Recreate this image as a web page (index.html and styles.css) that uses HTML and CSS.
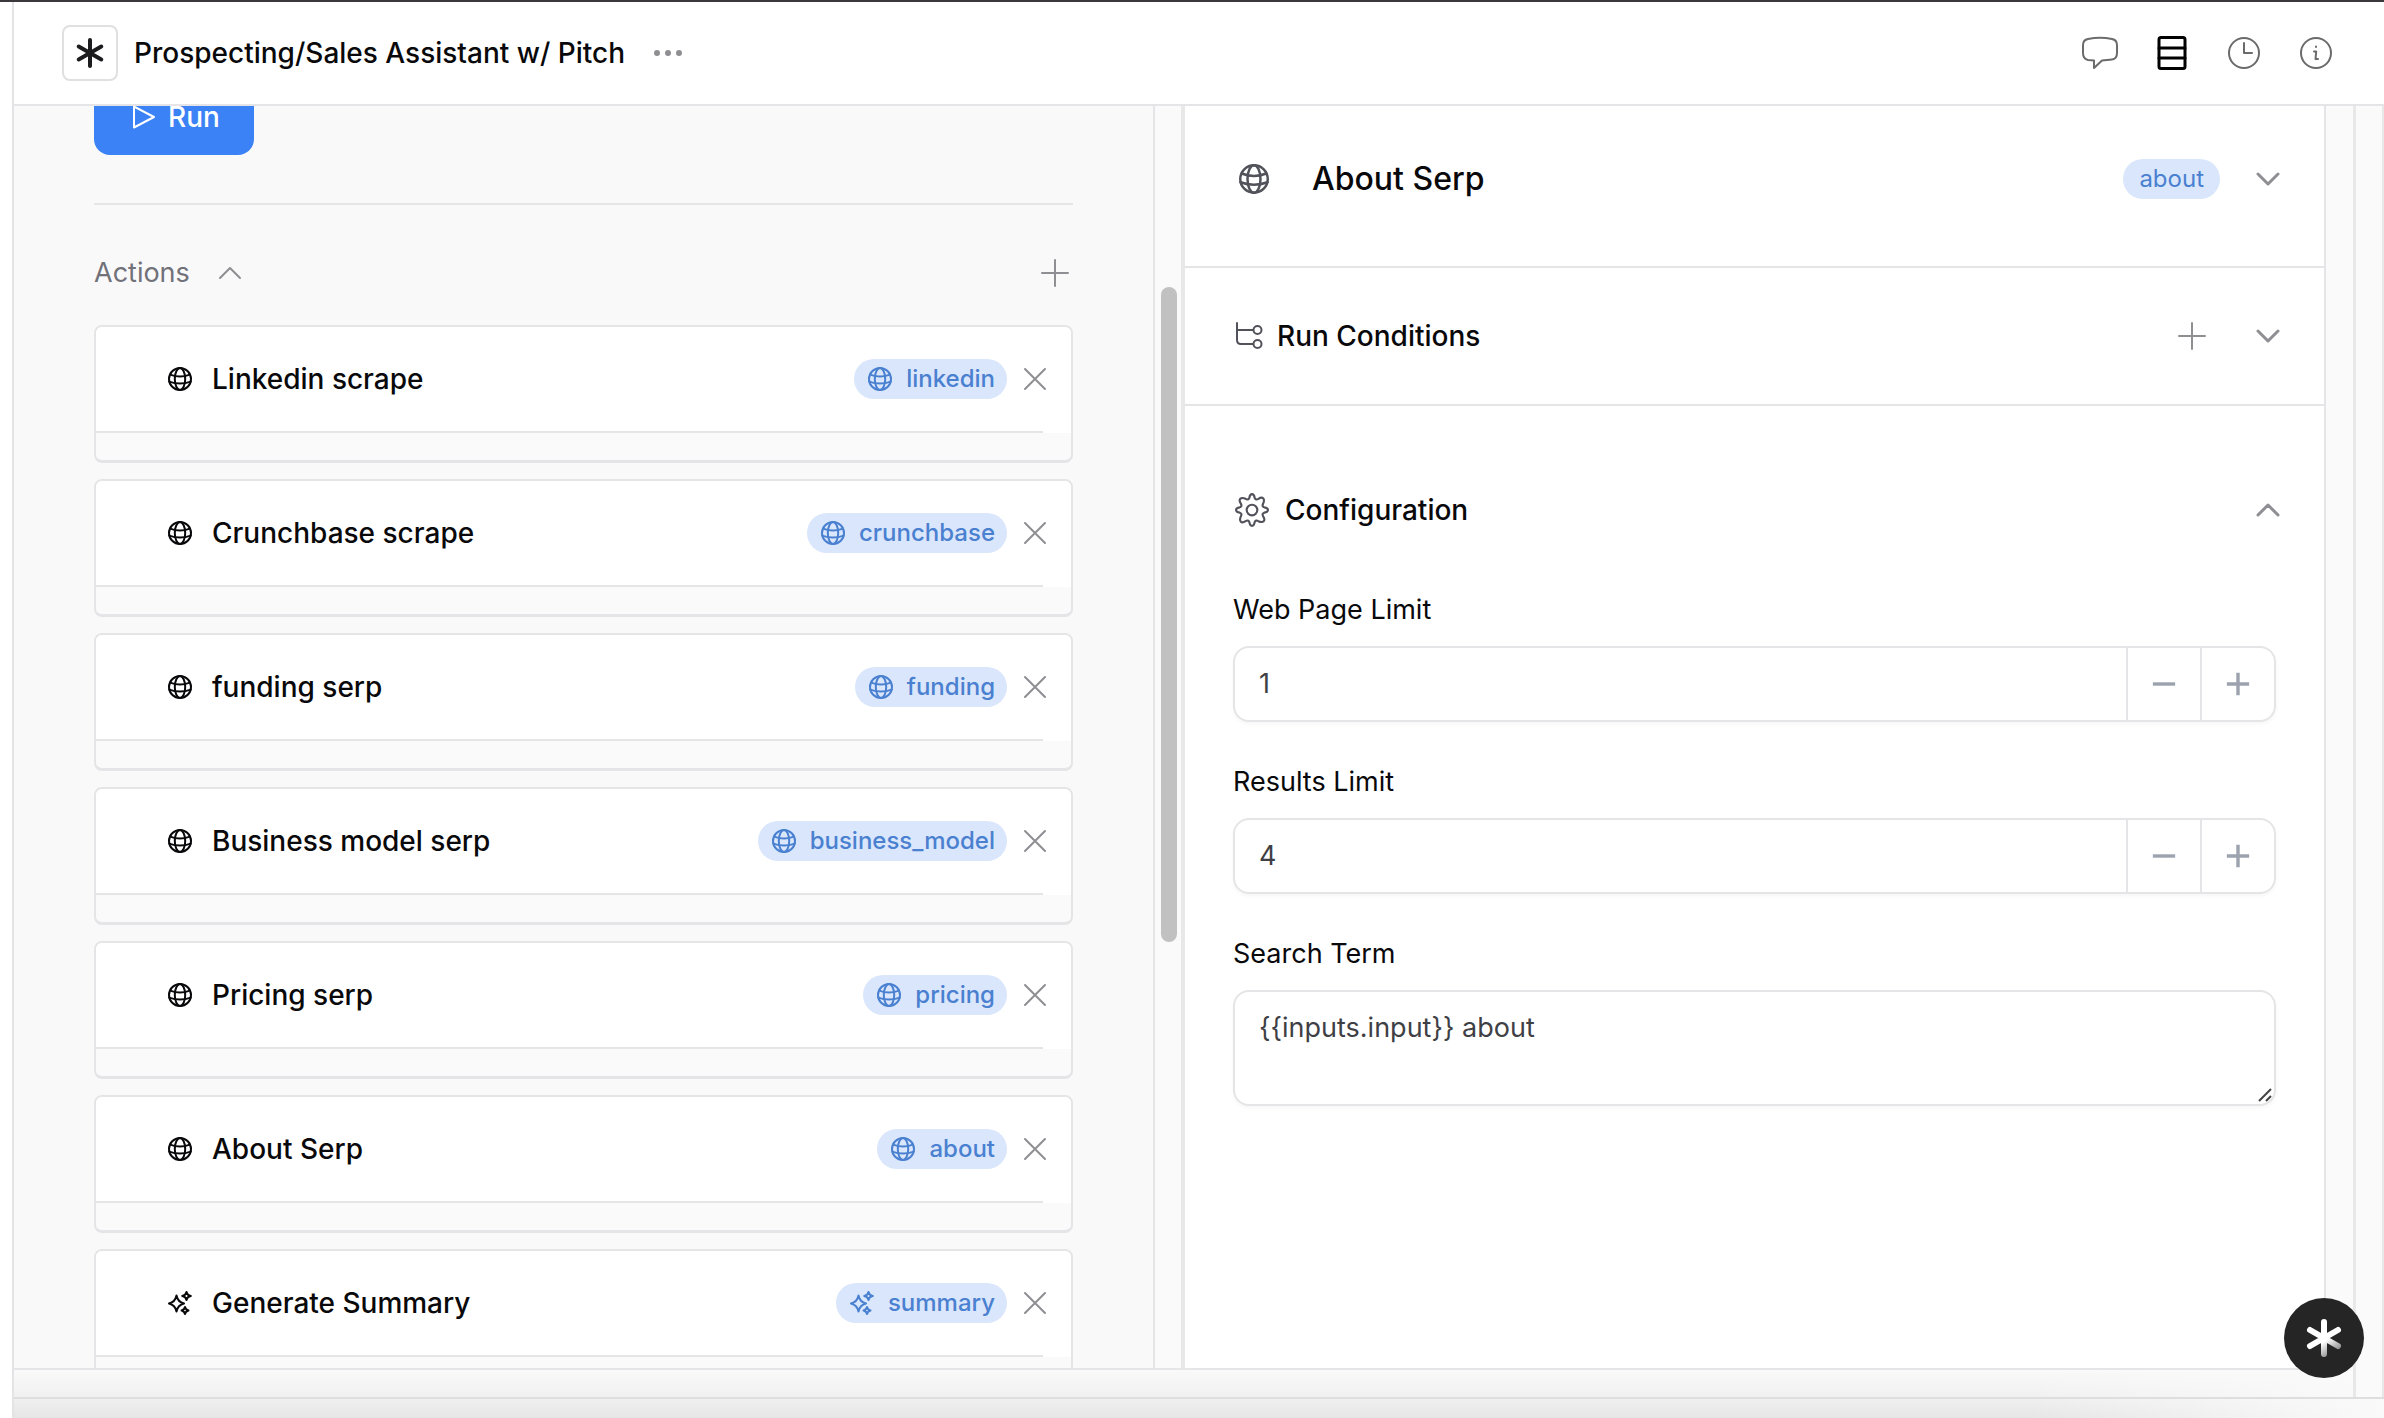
FILE: index.html
```
<!DOCTYPE html>
<html lang="en">
<head>
    <meta charset="UTF-8">
    <meta name="viewport" content="width=device-width, initial-scale=1.0">
    <title>Prospecting/Sales Assistant w/ Pitch</title>
    <link rel="stylesheet" href="styles.css">
</head>
<body>
    <!-- Shared icons -->
    <svg class="sprite" aria-hidden="true">
        <symbol id="globe" viewBox="0 0 24 24">
            <circle cx="12" cy="12" r="11"/>
            <ellipse cx="12" cy="12" rx="5.2" ry="11"/>
            <path d="M2.2 7.6Q12 11.6 21.8 7.6M1.2 14.6Q12 18.6 22.8 14.6"/>
        </symbol>
        <symbol id="sparkles" viewBox="0 0 24 24">
            <path d="M8.5 4.5Q9.8 11 16 12.5Q9.8 14 8.5 20.5Q7.2 14 1 12.5Q7.2 11 8.5 4.5Z"/>
            <path d="M18.5 1Q19.2 4.3 22.8 5Q19.2 5.7 18.5 9Q17.8 5.7 14.2 5Q17.8 4.3 18.5 1Z"/>
            <path d="M17 16Q17.6 18.8 20.5 19.5Q17.6 20.2 17 23Q16.4 20.2 13.5 19.5Q16.4 18.8 17 16Z"/>
        </symbol>
        <symbol id="cross" viewBox="0 0 24 24">
            <path d="M2 2L22 22M22 2L2 22"/>
        </symbol>
        <symbol id="plus" viewBox="0 0 28 28">
            <path d="M14 1V27M1 14H27"/>
        </symbol>
        <symbol id="minus" viewBox="0 0 28 28">
            <path d="M1 14H27"/>
        </symbol>
        <symbol id="down" viewBox="0 0 24 24">
            <path d="M2 7L12 17L22 7"/>
        </symbol>
        <symbol id="up" viewBox="0 0 24 24">
            <path d="M2 17L12 7L22 17"/>
        </symbol>
        <symbol id="asterisk" viewBox="0 0 32 32">
            <path d="M16 3V29M4.7 9.5L27.3 22.5M27.3 9.5L4.7 22.5"/>
        </symbol>
    </svg>

    <div class="window">
        <header class="topbar">
            <span class="logo"><svg class="icon"><use href="#asterisk"/></svg></span>
            <h1>Prospecting/Sales Assistant w/ Pitch</h1>
            <button class="icon-btn more" aria-label="More">
                <svg class="icon" viewBox="0 0 28 8"><circle cx="3" cy="4" r="3"/><circle cx="14" cy="4" r="3"/><circle cx="25" cy="4" r="3"/></svg>
            </button>
            <nav class="tools">
                <button class="icon-btn" aria-label="Chat">
                    <svg class="icon" viewBox="0 0 36 36"><path d="M6 4Q18 1.5 30 4Q35 5 35 10V18Q35 24 30 24.5L20 25.5L12 33V25.5L6 25Q1 24 1 18V10Q1 5 6 4Z"/></svg>
                </button>
                <button class="icon-btn active" aria-label="Steps">
                    <svg class="icon" viewBox="0 0 36 36"><rect x="5" y="2.5" width="26" height="31" rx="2"/><path d="M5 13H31M5 23H31"/></svg>
                </button>
                <button class="icon-btn" aria-label="History">
                    <svg class="icon" viewBox="0 0 36 36"><circle cx="18" cy="18" r="15"/><path d="M18 8V18H26"/></svg>
                </button>
                <button class="icon-btn" aria-label="Info">
                    <svg class="icon" viewBox="0 0 36 36"><circle cx="18" cy="18" r="15"/><path d="M16 16.5H18.2L17.5 24H20M18 11.5V12"/></svg>
                </button>
            </nav>
        </header>

        <div class="frame">
            <main class="board">
                <section class="panel steps">
                    <div class="steps-body">
                        <button class="run">
                            <svg class="icon" viewBox="0 0 24 24"><path d="M2 1.5V22.5L22 12Z"/></svg>
                            Run
                        </button>
                        <div class="actions-head">
                            <h2>Actions</h2>
                            <button class="icon-btn" aria-label="Collapse actions"><svg class="icon"><use href="#up"/></svg></button>
                            <button class="icon-btn add" aria-label="Add action"><svg class="icon"><use href="#plus"/></svg></button>
                        </div>
                        <ul class="actions">
                            <li class="action">
                                <div class="action-row">
                                    <svg class="icon"><use href="#globe"/></svg>
                                    <span class="name">Linkedin scrape</span>
                                    <span class="tag"><svg class="icon"><use href="#globe"/></svg>linkedin</span>
                                    <button class="icon-btn" aria-label="Remove Linkedin scrape"><svg class="icon"><use href="#cross"/></svg></button>
                                </div>
                            </li>
                            <li class="action">
                                <div class="action-row">
                                    <svg class="icon"><use href="#globe"/></svg>
                                    <span class="name">Crunchbase scrape</span>
                                    <span class="tag"><svg class="icon"><use href="#globe"/></svg>crunchbase</span>
                                    <button class="icon-btn" aria-label="Remove Crunchbase scrape"><svg class="icon"><use href="#cross"/></svg></button>
                                </div>
                            </li>
                            <li class="action">
                                <div class="action-row">
                                    <svg class="icon"><use href="#globe"/></svg>
                                    <span class="name">funding serp</span>
                                    <span class="tag"><svg class="icon"><use href="#globe"/></svg>funding</span>
                                    <button class="icon-btn" aria-label="Remove funding serp"><svg class="icon"><use href="#cross"/></svg></button>
                                </div>
                            </li>
                            <li class="action">
                                <div class="action-row">
                                    <svg class="icon"><use href="#globe"/></svg>
                                    <span class="name">Business model serp</span>
                                    <span class="tag"><svg class="icon"><use href="#globe"/></svg>business_model</span>
                                    <button class="icon-btn" aria-label="Remove Business model serp"><svg class="icon"><use href="#cross"/></svg></button>
                                </div>
                            </li>
                            <li class="action">
                                <div class="action-row">
                                    <svg class="icon"><use href="#globe"/></svg>
                                    <span class="name">Pricing serp</span>
                                    <span class="tag"><svg class="icon"><use href="#globe"/></svg>pricing</span>
                                    <button class="icon-btn" aria-label="Remove Pricing serp"><svg class="icon"><use href="#cross"/></svg></button>
                                </div>
                            </li>
                            <li class="action">
                                <div class="action-row">
                                    <svg class="icon"><use href="#globe"/></svg>
                                    <span class="name">About Serp</span>
                                    <span class="tag"><svg class="icon"><use href="#globe"/></svg>about</span>
                                    <button class="icon-btn" aria-label="Remove About Serp"><svg class="icon"><use href="#cross"/></svg></button>
                                </div>
                            </li>
                            <li class="action">
                                <div class="action-row">
                                    <svg class="icon"><use href="#sparkles"/></svg>
                                    <span class="name">Generate Summary</span>
                                    <span class="tag"><svg class="icon"><use href="#sparkles"/></svg>summary</span>
                                    <button class="icon-btn" aria-label="Remove Generate Summary"><svg class="icon"><use href="#cross"/></svg></button>
                                </div>
                            </li>
                        </ul>
                    </div>
                </section>

                <div class="rail"><div class="thumb"></div></div>

                <section class="panel details">
                    <div class="section about">
                        <svg class="icon"><use href="#globe"/></svg>
                        <h2>About Serp</h2>
                        <span class="tag">about</span>
                        <button class="icon-btn chevron" aria-label="Expand about"><svg class="icon"><use href="#down"/></svg></button>
                    </div>
                    <div class="section conditions">
                        <svg class="icon" viewBox="0 0 28 28"><path d="M2 1V18Q2 22 6 22H18M2 8H18"/><circle cx="22.5" cy="8" r="4"/><circle cx="22.5" cy="22" r="4"/></svg>
                        <h3>Run Conditions</h3>
                        <button class="icon-btn add" aria-label="Add condition"><svg class="icon"><use href="#plus"/></svg></button>
                        <button class="icon-btn chevron" aria-label="Expand conditions"><svg class="icon"><use href="#down"/></svg></button>
                    </div>
                    <div class="section config">
                        <svg class="icon" viewBox="0 0 32 32"><path d="M13.5 4.5Q14 1 16 1T18.5 4.5Q19.5 7 22 5.5Q25 3.5 26.5 5T26.5 10Q25 12.5 27.5 13.5Q31 14 31 16T27.5 18.5Q25 19.5 26.5 22Q28.5 25 27 26.5T22 26.5Q19.5 25 18.5 27.5Q18 31 16 31T13.5 27.5Q12.5 25 10 26.5Q7 28.5 5.5 27T5.5 22Q7 19.5 4.5 18.5Q1 18 1 16T4.5 13.5Q7 12.5 5.5 10Q3.5 7 5 5.5T10 5.5Q12.5 7 13.5 4.5Z"/><circle cx="16" cy="16" r="5"/></svg>
                        <h3>Configuration</h3>
                        <button class="icon-btn chevron" aria-label="Collapse configuration"><svg class="icon"><use href="#up"/></svg></button>
                    </div>
                    <form class="fields">
                        <div class="field">
                            <label for="page-limit">Web Page Limit</label>
                            <div class="stepper">
                                <input type="number" id="page-limit" value="1">
                                <button type="button" aria-label="Decrease"><svg class="icon"><use href="#minus"/></svg></button>
                                <button type="button" aria-label="Increase"><svg class="icon"><use href="#plus"/></svg></button>
                            </div>
                        </div>
                        <div class="field">
                            <label for="results-limit">Results Limit</label>
                            <div class="stepper">
                                <input type="number" id="results-limit" value="4">
                                <button type="button" aria-label="Decrease"><svg class="icon"><use href="#minus"/></svg></button>
                                <button type="button" aria-label="Increase"><svg class="icon"><use href="#plus"/></svg></button>
                            </div>
                        </div>
                        <div class="field">
                            <label for="search-term">Search Term</label>
                            <div class="term">
                                <textarea id="search-term">{{inputs.input}} about</textarea>
                                <svg class="grip" viewBox="0 0 14 14"><path d="M1 13L13 1M8 13L13 8"/></svg>
                            </div>
                        </div>
                    </form>
                </section>
            </main>
        </div>
    </div>

    <button class="help" aria-label="Help">
        <svg viewBox="0 0 40 40">
            <linearGradient id="shade" gradientUnits="userSpaceOnUse" x1="12" y1="10" x2="30" y2="36">
                <stop offset="0.5" stop-color="#fff"/>
                <stop offset="1" stop-color="#888"/>
            </linearGradient>
            <path stroke="url(#shade)" d="M20 4V36M6 12L34 28M34 12L6 28"/>
        </svg>
    </button>
</body>
</html>
```

FILE: styles.css
```
* {
    box-sizing: border-box;
}

body {
    margin: 0;
    height: 100vh;
    overflow: hidden;
    padding-left: 12px;
    border-top: 2px solid #3a383a;
    background-color: white;
    font-family: Inter, sans-serif;
    font-size: 28px;
    line-height: 36px;
    color: #09090b;
}

h1, h2, h3, ul {
    margin: 0;
    padding: 0;
    font-size: 28px;
    font-weight: 500;
}

button, input, textarea {
    font: inherit;
    border: none;
    background: none;
    padding: 0;
}

.sprite {
    display: none;
}

.icon {
    display: block;
    flex: none;
    width: 24px;
    height: 24px;
    fill: none;
    stroke: currentColor;
    stroke-width: 2;
    stroke-linecap: round;
    stroke-linejoin: round;
}

.icon-btn {
    color: #8e8e93;
}

.window {
    height: 100%;
    display: flex;
    flex-direction: column;
    border-left: 2px solid #e4e4e7;
}

/* Top bar */
.topbar {
    flex: none;
    height: 104px;
    display: flex;
    align-items: center;
    padding: 0 50px 0 48px;
    border-bottom: 2px solid #e5e5e7;
}

.logo {
    width: 56px;
    height: 56px;
    margin-right: 16px;
    display: flex;
    align-items: center;
    justify-content: center;
    border: 2px solid #e0e0e0;
    border-radius: 8px;
    color: #1c1c1e;
}

.logo .icon {
    width: 32px;
    height: 32px;
    stroke-width: 4;
}

.more {
    margin-left: 28px;
}

.more .icon {
    width: 30px;
    height: 8px;
    fill: currentColor;
    stroke: none;
}

.tools {
    margin-left: auto;
    display: flex;
    gap: 36px;
}

.tools .icon-btn {
    color: #6b6b6b;
}

.tools .icon {
    width: 36px;
    height: 36px;
}

.tools .active {
    color: black;
}

.tools .active .icon {
    stroke-width: 3;
}

/* Frame around the two panels */
.frame {
    flex: 1;
    min-height: 0;
    display: flex;
    padding-bottom: 19px;
    background: linear-gradient(to right, transparent 85%, #fafafa), linear-gradient(to top, #e6e6e6, #f0f0f0 20px, #fafafa 50px);
}

.board {
    flex: 1;
    display: grid;
    grid-template-columns: 1fr 30px 1fr;
    padding: 0 58px 27px 0;
    border-bottom: 2px solid #dedede;
    background: linear-gradient(to left, #e8e8e8 2px, #fafafa 2px 28px, #e8e8e8 28px 31px, transparent 31px);
}

.panel {
    min-width: 0;
    overflow: hidden;
    border-right: 2px solid #e5e5e7;
    border-bottom: 2px solid #e5e5e7;
}

.steps {
    background-color: #f9f9f9;
}

/* List is scrolled down, the run button is partly under the top bar */
.steps-body {
    margin-top: -28px;
    padding: 0 80px;
}

.run {
    height: 77px;
    padding: 0 34px 0 38px;
    display: flex;
    align-items: center;
    gap: 12px;
    border-radius: 16px;
    background-color: #3b82f6;
    color: white;
    font-weight: 500;
}

.actions-head {
    margin-top: 48px;
    padding: 50px 4px 34px 0;
    display: flex;
    align-items: center;
    border-top: 2px solid #e5e5e7;
}

.actions-head h2 {
    margin-right: 28px;
    font-size: 27px;
    font-weight: 400;
    color: #71717a;
}

.add {
    margin-left: auto;
}

.add .icon {
    width: 28px;
    height: 28px;
}

.actions {
    list-style: none;
    display: flex;
    flex-direction: column;
    gap: 16px;
}

.action {
    height: 138px;
    border: 2px solid #e5e5e7;
    border-bottom-width: 3px;
    border-radius: 8px;
    background-color: #fafafa;
    overflow: hidden;
}

.action-row {
    height: 106px;
    padding: 0 24px 2px 72px;
    display: flex;
    align-items: center;
    background: linear-gradient(to right, #e5e5e7, #e5e5e7) no-repeat left bottom / calc(100% - 28px) 2px, white;
}

.name {
    margin: 0 auto 0 20px;
    font-weight: 500;
}

.tag {
    height: 40px;
    padding: 0 12px 0 14px;
    display: flex;
    align-items: center;
    gap: 14px;
    border-radius: 20px;
    background-color: #dae6fc;
    color: #4a80d0;
    font-size: 24px;
    font-weight: 500;
}

.action-row .icon-btn {
    margin-left: 16px;
}

/* Splitter with scrollbar */
.rail {
    padding: 181px 8px 0 6px;
    border-right: 4px solid #e8e8e8;
    border-bottom: 2px solid #e5e5e7;
    background-color: #fafafa;
}

.thumb {
    width: 16px;
    height: 655px;
    border-radius: 8px;
    background-color: #c1c1c1;
}

/* Details */
.details {
    background-color: white;
}

.section {
    display: flex;
    align-items: center;
    padding: 0 44px 0 50px;
    border-bottom: 2px solid #e5e5e7;
}

.section > .icon {
    color: #52525b;
}

.chevron {
    margin-left: 36px;
}

.chevron .icon {
    stroke-width: 3;
}

.about {
    padding: 53px 44px 67px 54px;
}

.about > .icon {
    width: 30px;
    height: 30px;
}

.about h2 {
    margin: 0 auto 0 43px;
    font-size: 32px;
    line-height: 40px;
}

.about .tag {
    padding: 0 16px;
    font-weight: 400;
}

.conditions {
    padding-top: 50px;
    padding-bottom: 50px;
}

.conditions > .icon {
    width: 28px;
    height: 28px;
}

.conditions h3 {
    margin-left: 14px;
}

.conditions .chevron {
    margin-left: 50px;
}

.config {
    padding-top: 86px;
    border-bottom: none;
}

.config > .icon {
    width: 34px;
    height: 34px;
}

.config h3 {
    margin-left: 16px;
}

.config .chevron {
    margin-left: auto;
}

.fields {
    padding: 64px 48px 0;
    display: flex;
    flex-direction: column;
    gap: 42px;
    font-size: 27px;
}

.field label {
    display: block;
    margin-bottom: 18px;
}

.stepper, .term textarea {
    width: 100%;
    border: 2px solid #e5e5e7;
    border-radius: 16px;
    box-shadow: 0 2px 4px rgba(0, 0, 0, 0.04);
    color: #3f3f46;
}

.stepper {
    height: 76px;
    display: flex;
}

.stepper input {
    flex: 1;
    min-width: 0;
    padding: 0 24px;
    color: #3f3f46;
    appearance: textfield;
}

.stepper button {
    width: 74px;
    display: flex;
    align-items: center;
    justify-content: center;
    border-left: 2px solid #e5e5e7;
    color: #9ca3af;
}

.stepper .icon {
    stroke-width: 4;
    stroke-linecap: butt;
}

.term {
    position: relative;
}

.term textarea {
    display: block;
    height: 116px;
    padding: 18px 24px;
    resize: none;
}

.grip {
    position: absolute;
    right: 4px;
    bottom: 4px;
    width: 14px;
    height: 14px;
    fill: none;
    stroke: #444;
    stroke-width: 2;
}

/* Floating help button */
.help {
    position: fixed;
    right: 20px;
    bottom: 40px;
    width: 80px;
    height: 80px;
    display: flex;
    align-items: center;
    justify-content: center;
    border-radius: 50%;
    background-color: #252525;
}

.help svg {
    width: 40px;
    height: 40px;
    fill: none;
    stroke-width: 6;
    stroke-linecap: round;
}
```
